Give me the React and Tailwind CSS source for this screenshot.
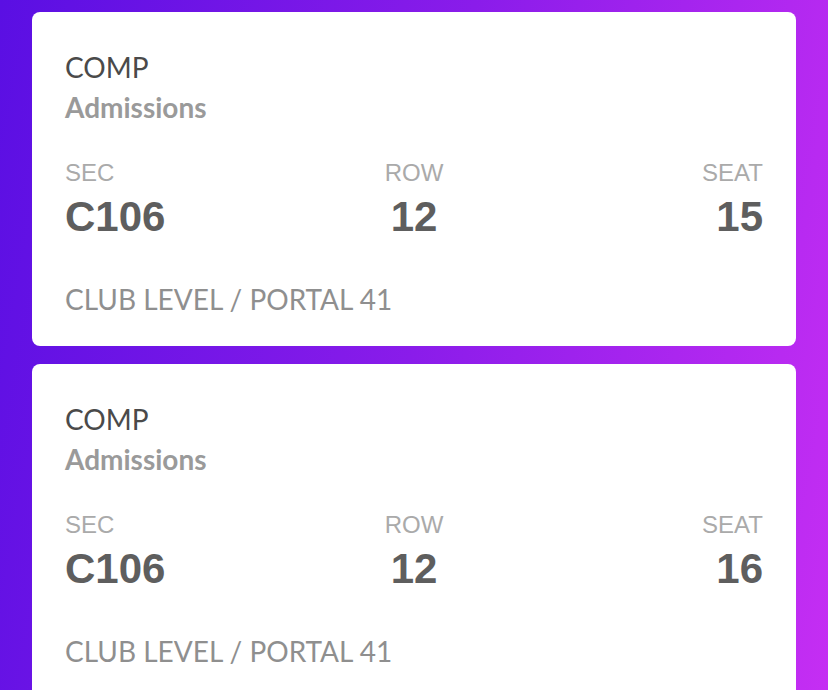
import React from "react";

const tickets = [
  { type: "COMP", name: "Admissions", sec: "C106", row: "12", seat: "15", place: "CLUB LEVEL / PORTAL 41" },
  { type: "COMP", name: "Admissions", sec: "C106", row: "12", seat: "16", place: "CLUB LEVEL / PORTAL 41" },
];

export default function App() {
  return (
    <div className="h-[690px] w-[828px] overflow-hidden bg-[linear-gradient(100deg,#5a0fe3_0%,#8a1cea_50%,#c52ef3_100%)] px-8 pt-3">
      <div className="flex flex-col gap-[18px]">
        {tickets.map((t, i) => (
          <TicketCard key={i} ticket={t} />
        ))}
      </div>
    </div>
  );
}

function TicketCard({ ticket }) {
  return (
    <div className="rounded-lg bg-white px-[33px] pb-[31px] pt-[35px]">
      <div className="font-['Lato',sans-serif]">
        <p className="text-[28px] leading-[40px] text-[#4a4a4a]">{ticket.type}</p>
        <p className="text-[28px] font-bold leading-[40px] text-[#9a9a9a]">{ticket.name}</p>
      </div>

      <div className="mt-[32px] grid grid-cols-3 font-['Liberation_Sans',Arial,sans-serif]">
        <Field label="SEC" value={ticket.sec} align="text-left" />
        <Field label="ROW" value={ticket.row} align="text-center" />
        <Field label="SEAT" value={ticket.seat} align="text-right" />
      </div>

      <p className="mt-[44px] font-['Lato',sans-serif] text-[28px] leading-[32px] text-[#8f8f8f]">
        {ticket.place}
      </p>
    </div>
  );
}

function Field({ label, value, align }) {
  return (
    <div className={align}>
      <p className="text-[24px] leading-[28px] text-[#aaaaaa]">{label}</p>
      <p className="mt-[8px] text-[42px] font-bold leading-[44px] text-[#5e5e5e]">{value}</p>
    </div>
  );
}
